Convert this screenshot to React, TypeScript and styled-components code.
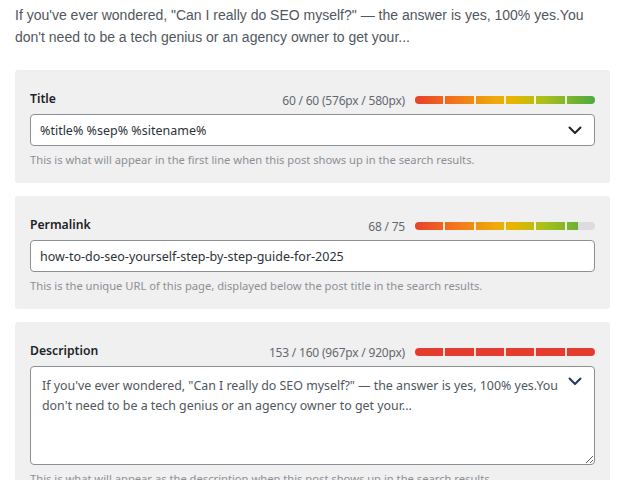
import React from "react";
import styled, { createGlobalStyle } from "styled-components";

const GlobalStyle = createGlobalStyle`
  html, body {
    margin: 0;
    padding: 0;
    background: #fff;
  }
  body {
    font-family: "Noto Sans", "Open Sans", sans-serif;
  }
`;

const Page = styled.div`
  padding: 4px 7px 0 15px;
  width: 617px;
  height: 480px;
  box-sizing: border-box;
  overflow: hidden;
`;

const Excerpt = styled.p`
  margin: 0 0 22px 0;
  font-family: "Liberation Sans", Arial, sans-serif;
  font-size: 14px;
  line-height: 22px;
  color: #50575e;
`;

const Stack = styled.div`
  display: flex;
  flex-direction: column;
  gap: 13px;
`;

const Card = styled.section`
  background: #f0f0f1;
  border-radius: 3px;
  padding: 19px 15px 15px 15px;
  display: flex;
  flex-direction: column;
`;

const Header = styled.div`
  display: flex;
  align-items: center;
  justify-content: space-between;
  height: 20px;
  margin-bottom: 5px;
`;

const Label = styled.label`
  font-size: 12.2px;
  font-weight: 600;
  color: #1d2327;
  line-height: 20px;
`;

const CounterWrap = styled.div`
  display: flex;
  align-items: center;
  gap: 10px;
  margin-top: 2px;
`;

const Count = styled.span`
  font-size: 12px;
  color: #646970;
  letter-spacing: -0.2px;
`;

const Meter = styled.div`
  position: relative;
  width: 180px;
  height: 8px;
  border-radius: 4px;
  overflow: hidden;
  background: #dcdcde;
`;

const Fill = styled.div<{ $over?: boolean }>`
  height: 100%;
  background: ${(p) =>
    p.$over
      ? "#e43d2d"
      : "linear-gradient(90deg, #e8402a 0%, #f2741c 22%, #eeaa0c 45%, #e6b600 55%, #a9bf1c 72%, #4caa40 100%)"};
  background-size: 180px 100%;
  background-repeat: no-repeat;
`;

const Dividers = styled.div`
  position: absolute;
  inset: 0;
  display: flex;
`;

const Segment = styled.div`
  flex: 1;
  border-right: 2px solid rgba(255, 255, 255, 0.85);
  &:last-child {
    border-right: none;
  }
`;

const FieldBox = styled.div`
  position: relative;
`;

const TextInput = styled.input`
  display: block;
  width: 100%;
  height: 32px;
  box-sizing: border-box;
  border: 1px solid #8c8f94;
  border-radius: 4px;
  background: #fff;
  padding: 0 40px 0 9px;
  font-family: "Noto Sans", "Open Sans", sans-serif;
  font-size: 12.5px;
  color: #2c3338;
  outline: none;
`;

const TextArea = styled.textarea`
  display: block;
  width: 100%;
  height: 99px;
  box-sizing: border-box;
  border: 1px solid #8c8f94;
  border-radius: 4px;
  background: #fff;
  padding: 9px 28px 0 11px;
  font-family: "Noto Sans", "Open Sans", sans-serif;
  font-size: 12.4px;
  line-height: 20px;
  color: #50575e;
  outline: none;
  resize: vertical;
`;

const Chevron = styled.span<{ $top: number; $color: string }>`
  position: absolute;
  right: 13px;
  top: ${(p) => p.$top}px;
  display: flex;
  color: ${(p) => p.$color};
`;

const Help = styled.p`
  margin: 6px 0 0 0;
  font-size: 11.2px;
  line-height: 16px;
  color: #8c8f94;
`;

function ChevronIcon() {
  return (
    <svg width="14" height="9" viewBox="0 0 14 9" fill="none">
      <path d="M1.5 1.5 L7 7 L12.5 1.5" stroke="currentColor" strokeWidth="2" strokeLinecap="round" strokeLinejoin="round" />
    </svg>
  );
}

function LengthMeter({ value, max, over }: { value: number; max: number; over?: boolean }) {
  const pct = Math.min(100, (value / max) * 100);
  return (
    <Meter>
      <Fill $over={over} style={{ width: `${pct}%` }} />
      <Dividers>
        {Array.from({ length: 6 }).map((_, i) => (
          <Segment key={i} />
        ))}
      </Dividers>
    </Meter>
  );
}

const desc =
  "If you've ever wondered, \"Can I really do SEO myself?\" \u2014 the answer is yes, 100% yes.You don't need to be a tech genius or an agency owner to get your...";

export default function App() {
  return (
    <>
      <GlobalStyle />
      <Page>
        <Excerpt>{desc}</Excerpt>
        <Stack>
          <Card>
            <Header>
              <Label>Title</Label>
              <CounterWrap>
                <Count>60 / 60 (576px / 580px)</Count>
                <LengthMeter value={60} max={60} />
              </CounterWrap>
            </Header>
            <FieldBox>
              <TextInput readOnly value="%title% %sep% %sitename%" />
              <Chevron $top={12} $color="#1d2327">
                <ChevronIcon />
              </Chevron>
            </FieldBox>
            <Help>This is what will appear in the first line when this post shows up in the search results.</Help>
          </Card>

          <Card>
            <Header>
              <Label>Permalink</Label>
              <CounterWrap>
                <Count>68 / 75</Count>
                <LengthMeter value={68} max={75} />
              </CounterWrap>
            </Header>
            <FieldBox>
              <TextInput readOnly value="how-to-do-seo-yourself-step-by-step-guide-for-2025" />
            </FieldBox>
            <Help>This is the unique URL of this page, displayed below the post title in the search results.</Help>
          </Card>

          <Card>
            <Header>
              <Label>Description</Label>
              <CounterWrap>
                <Count>153 / 160 (967px / 920px)</Count>
                <LengthMeter value={160} max={160} over />
              </CounterWrap>
            </Header>
            <FieldBox>
              <TextArea readOnly value={desc} />
              <Chevron $top={11} $color="#1e3a5c">
                <ChevronIcon />
              </Chevron>
            </FieldBox>
            <Help>This is what will appear as the description when this post shows up in the search results.</Help>
          </Card>
        </Stack>
      </Page>
    </>
  );
}
